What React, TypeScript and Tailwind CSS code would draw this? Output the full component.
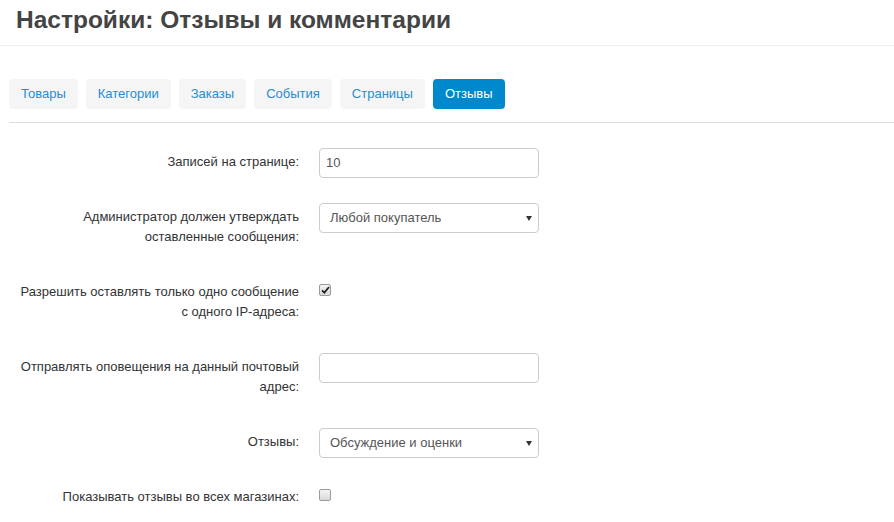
import React from 'react';

const tabs = ['Товары', 'Категории', 'Заказы', 'События', 'Страницы', 'Отзывы'];

const Caret: React.FC = () => (
  <svg width="6" height="5" viewBox="0 0 6 5" className="absolute right-[6px] top-[12px]">
    <path d="M0 0 H6 L3 5 Z" fill="#333" />
  </svg>
);

const Checkbox: React.FC<{ checked?: boolean }> = ({ checked }) => (
  <span className="mt-[6px] flex h-[12px] w-[12px] items-center justify-center rounded-[2px] border border-[#9a9a9a] bg-gradient-to-b from-[#f4f4f4] to-[#d9d9d9]">
    {checked && (
      <svg width="9" height="8" viewBox="0 0 9 8">
        <path d="M1 4.3 L3.4 6.6 L8 1" stroke="#222" strokeWidth="1.8" fill="none" />
      </svg>
    )}
  </span>
);

const Row: React.FC<{ label: React.ReactNode; children: React.ReactNode }> = ({ label, children }) => (
  <div className="flex items-start">
    <div className="ml-[5px] w-[285px] shrink-0 pt-1 pb-2.5 text-right text-[13px] leading-5 text-[#333]">{label}</div>
    <div className="ml-5">{children}</div>
  </div>
);

const Select: React.FC<{ value: string }> = ({ value }) => (
  <div className="relative h-[30px] w-[220px] rounded border border-[#ccc] bg-white pl-[10px] text-[13px] leading-[28px] text-[#555]">
    {value}
    <Caret />
  </div>
);

const Input: React.FC<{ value?: string }> = ({ value }) => (
  <div className="h-[30px] w-[220px] rounded border border-[#ccc] bg-white pl-[6px] text-[13px] leading-[28px] text-[#555]">
    {value}
  </div>
);

export default function App() {
  return (
    <div className="min-h-screen bg-white font-['Liberation_Sans',Arial,sans-serif]">
      <header className="h-[46px] border-b border-[#eee] px-4">
        <h1 className="pt-[3px] text-[24.5px] font-bold leading-[34px] text-[#444]">Настройки: Отзывы и комментарии</h1>
      </header>
      <div className="pl-[9px]">
        <nav className="mt-[33px] flex gap-2 border-b border-[#ddd] pb-[13px]">
          {tabs.map((t) => (
            <span
              key={t}
              className={
                t === 'Отзывы'
                  ? 'rounded bg-[#0088cc] px-3 text-[13px] leading-[30px] text-white'
                  : 'rounded bg-[#f5f5f5] px-3 text-[13px] leading-[30px] text-[#2a8bd0]'
              }
            >
              {t}
            </span>
          ))}
        </nav>
        <div className="flex flex-col gap-[21px] pt-[25px]">
          <Row label="Записей на странице:">
            <Input value="10" />
          </Row>
          <Row label="Администратор должен утверждать оставленные сообщения:">
            <Select value="Любой покупатель" />
          </Row>
          <Row label="Разрешить оставлять только одно сообщение с одного IP-адреса:">
            <Checkbox checked />
          </Row>
          <Row label="Отправлять оповещения на данный почтовый адрес:">
            <Input />
          </Row>
          <Row label="Отзывы:">
            <Select value="Обсуждение и оценки" />
          </Row>
          <Row label="Показывать отзывы во всех магазинах:">
            <Checkbox />
          </Row>
        </div>
      </div>
    </div>
  );
}
